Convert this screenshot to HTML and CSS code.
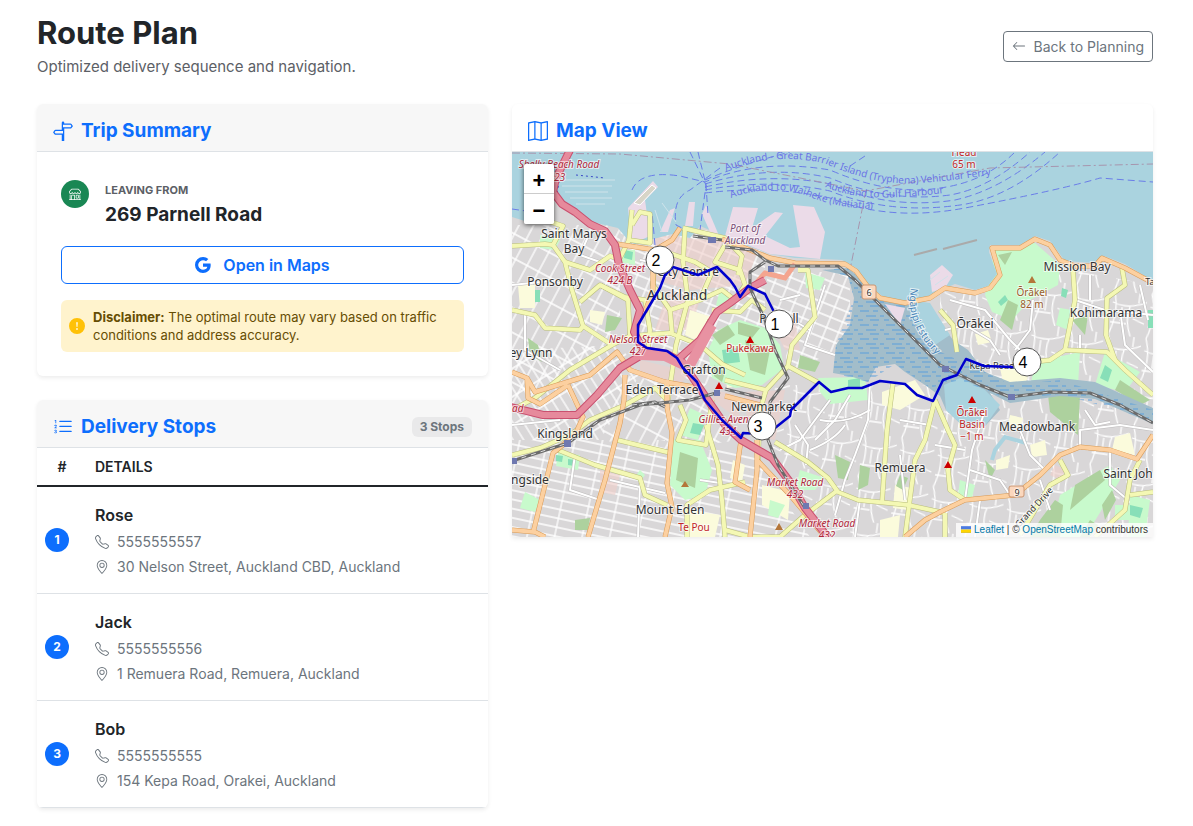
FILE: index.html
```html
<!DOCTYPE html>
<html lang="en">
<head>
<meta charset="utf-8">
<meta name="viewport" content="width=device-width, initial-scale=1">
<title>Route Plan</title>
<link rel="stylesheet" href="styles.css">
</head>
<body>
<svg class="sprite" aria-hidden="true">
  <symbol id="i-signpost" viewBox="0 0 16 16"><path d="M7 7V1.414a1 1 0 0 1 2 0V2h5a1 1 0 0 1 .8.4l.975 1.3a.5.5 0 0 1 0 .6L14.8 5.6a1 1 0 0 1-.8.4H9v10H7v-5H2a1 1 0 0 1-.8-.4L.225 9.3a.5.5 0 0 1 0-.6L1.2 7.4A1 1 0 0 1 2 7zm1 3V8H2l-.75 1L2 10zm0-5h6l.75-1L14 3H8z"/></symbol>
  <symbol id="i-list" viewBox="0 0 16 16"><path fill-rule="evenodd" d="M5 11.5a.5.5 0 0 1 .5-.5h9a.5.5 0 0 1 0 1h-9a.5.5 0 0 1-.5-.5m0-4a.5.5 0 0 1 .5-.5h9a.5.5 0 0 1 0 1h-9a.5.5 0 0 1-.5-.5m0-4a.5.5 0 0 1 .5-.5h9a.5.5 0 0 1 0 1h-9a.5.5 0 0 1-.5-.5"/><path d="M1.713 11.865v-.474H2c.217 0 .363-.137.363-.317 0-.185-.158-.31-.361-.31-.223 0-.367.152-.373.31h-.59c.016-.467.373-.787.986-.787.588-.002.954.291.957.703a.595.595 0 0 1-.492.594v.033a.615.615 0 0 1 .569.631c.003.533-.502.8-1.051.8-.656 0-1-.37-1.008-.794h.582c.008.178.186.306.422.309.254 0 .424-.145.422-.35-.002-.195-.155-.348-.414-.348h-.3zm-.004-4.699h-.604v-.035c0-.408.295-.844.958-.844.583 0 .96.326.96.756 0 .389-.257.617-.476.848l-.537.572v.03h1.054V9H1.143v-.395l.957-.99c.138-.142.293-.304.293-.508 0-.18-.147-.32-.342-.32a.33.33 0 0 0-.342.338zM2.564 5h-.635V2.924h-.031l-.598.42v-.567l.629-.443h.635z"/></symbol>
  <symbol id="i-map" viewBox="0 0 16 16"><path fill-rule="evenodd" d="M15.817.113A.5.5 0 0 1 16 .5v14a.5.5 0 0 1-.402.49l-5 1a.5.5 0 0 1-.196 0L5.5 15.01l-4.902.98A.5.5 0 0 1 0 15.5v-14a.5.5 0 0 1 .402-.49l5-1a.5.5 0 0 1 .196 0L10.5.99l4.902-.98a.5.5 0 0 1 .415.103M10 1.91l-4-.8v12.98l4 .8zm1 12.98 4-.8V1.11l-4 .8zm-6-.8V1.11l-4 .8v12.98z"/></symbol>
  <symbol id="i-phone" viewBox="0 0 16 16"><path d="M3.654 1.328a.678.678 0 0 0-1.015-.063L1.605 2.3c-.483.484-.661 1.169-.45 1.77a17.6 17.6 0 0 0 4.168 6.608 17.6 17.6 0 0 0 6.608 4.168c.601.211 1.286.033 1.77-.45l1.034-1.034a.678.678 0 0 0-.063-1.015l-2.307-1.794a.68.68 0 0 0-.58-.122l-2.19.547a1.75 1.75 0 0 1-1.657-.459L5.482 8.062a1.75 1.75 0 0 1-.46-1.657l.548-2.19a.68.68 0 0 0-.122-.58zM1.884.511a1.745 1.745 0 0 1 2.612.163L6.29 2.98c.329.423.445.974.315 1.494l-.547 2.19a.68.68 0 0 0 .178.643l2.457 2.457a.68.68 0 0 0 .644.178l2.189-.547a1.75 1.75 0 0 1 1.494.315l2.306 1.794c.829.645.905 1.87.163 2.611l-1.034 1.034c-.74.74-1.846 1.065-2.877.702a18.6 18.6 0 0 1-7.01-4.42 18.6 18.6 0 0 1-4.42-7.009c-.362-1.03-.037-2.137.703-2.877z"/></symbol>
  <symbol id="i-pin" viewBox="0 0 16 16"><path d="M12.166 8.94c-.524 1.062-1.234 2.12-1.96 3.07A32 32 0 0 1 8 14.58a32 32 0 0 1-2.206-2.57c-.726-.95-1.436-2.008-1.96-3.07C3.304 7.867 3 6.862 3 6a5 5 0 0 1 10 0c0 .862-.305 1.867-.834 2.94M8 16s6-5.686 6-10A6 6 0 0 0 2 6c0 4.314 6 10 6 10"/><path d="M8 8a2 2 0 1 1 0-4 2 2 0 0 1 0 4m0 1a3 3 0 1 0 0-6 3 3 0 0 0 0 6"/></symbol>
  <symbol id="i-arrow" viewBox="0 0 16 16"><path fill-rule="evenodd" d="M15 8a.5.5 0 0 0-.5-.5H2.707l3.147-3.146a.5.5 0 1 0-.708-.708l-4 4a.5.5 0 0 0 0 .708l4 4a.5.5 0 0 0 .708-.708L2.707 8.5H14.5A.5.5 0 0 0 15 8"/></symbol>
  <symbol id="i-google" viewBox="0 0 16 16"><path d="M15.545 6.558a9.4 9.4 0 0 1 .139 1.626c0 2.434-.87 4.492-2.384 5.885h.002C11.978 15.292 10.158 16 8 16A8 8 0 1 1 8 0a7.7 7.7 0 0 1 5.352 2.082l-2.284 2.284A4.35 4.35 0 0 0 8 3.166c-2.087 0-3.86 1.408-4.492 3.304a4.8 4.8 0 0 0 0 3.063h.003c.635 1.893 2.405 3.301 4.492 3.301 1.078 0 2.004-.276 2.722-.764h-.003a3.7 3.7 0 0 0 1.599-2.431H8v-3.08z"/></symbol>
  <symbol id="i-shop" viewBox="0 0 16 16"><path d="M2.97 1.35A1 1 0 0 1 3.73 1h8.54a1 1 0 0 1 .76.35l2.609 3.044A1.5 1.5 0 0 1 16 5.37v.255a2.375 2.375 0 0 1-4.25 1.458A2.37 2.37 0 0 1 9.875 8 2.37 2.37 0 0 1 8 7.083 2.37 2.37 0 0 1 6.125 8a2.37 2.37 0 0 1-1.875-.917A2.375 2.375 0 0 1 0 5.625V5.37a1.5 1.5 0 0 1 .361-.976zm1.78 4.275a1.375 1.375 0 0 0 2.75 0 .5.5 0 0 1 1 0 1.375 1.375 0 0 0 2.75 0 .5.5 0 0 1 1 0 1.375 1.375 0 1 0 2.75 0V5.37a.5.5 0 0 0-.12-.325L12.27 2H3.73L1.12 5.045A.5.5 0 0 0 1 5.37v.255a1.375 1.375 0 0 0 2.75 0 .5.5 0 0 1 1 0M1.5 8.5A.5.5 0 0 1 2 9v6h1v-5a1 1 0 0 1 1-1h3a1 1 0 0 1 1 1v5h6V9a.5.5 0 0 1 1 0v6h.5a.5.5 0 0 1 0 1H.5a.5.5 0 0 1 0-1H1V9a.5.5 0 0 1 .5-.5M4 15h3v-5H4zm5-5a1 1 0 0 1 1-1h2a1 1 0 0 1 1 1v3a1 1 0 0 1-1 1h-2a1 1 0 0 1-1-1zm3 0h-2v3h2z"/></symbol>
  <symbol id="i-alert" viewBox="0 0 16 16"><path d="M16 8A8 8 0 1 1 0 8a8 8 0 0 1 16 0M8 4a.905.905 0 0 0-.9.995l.35 3.507a.552.552 0 0 0 1.1 0l.35-3.507A.905.905 0 0 0 8 4m.002 6a1 1 0 1 0 0 2 1 1 0 0 0 0-2"/></symbol>
</svg>

<main class="page">
  <header class="page-head">
    <div>
      <h1>Route Plan</h1>
      <p class="lead">Optimized delivery sequence and navigation.</p>
    </div>
    <a class="btn-back" href="#planning"><svg class="icon-sm"><use href="#i-arrow"/></svg>Back to Planning</a>
  </header>

  <div class="layout">
    <div class="side">
      <section class="card">
        <div class="card-head tinted"><h2><svg class="icon-lg"><use href="#i-signpost"/></svg>Trip Summary</h2></div>
        <div class="card-body">
          <div class="origin">
            <span class="origin-icon"><svg class="icon-xs"><use href="#i-shop"/></svg></span>
            <div>
              <div class="eyebrow">LEAVING FROM</div>
              <div class="address">269 Parnell Road</div>
            </div>
          </div>
          <a class="btn-maps" href="#maps"><svg class="icon-md"><use href="#i-google"/></svg>Open in Maps</a>
          <div class="notice" role="note">
            <svg class="icon-md"><use href="#i-alert"/></svg>
            <p><strong>Disclaimer:</strong> The optimal route may vary based on traffic conditions and address accuracy.</p>
          </div>
        </div>
      </section>

      <section class="card">
        <div class="card-head tinted"><h2><svg class="icon-lg"><use href="#i-list"/></svg>Delivery Stops</h2><span class="pill">3 Stops</span></div>
        <table class="stops">
          <thead><tr><th class="num" scope="col">#</th><th scope="col">DETAILS</th></tr></thead>
          <tbody>
            <tr><td class="num"><span class="badge">1</span></td><td>
              <div class="name">Rose</div>
              <div class="line"><svg class="icon-sm"><use href="#i-phone"/></svg>5555555557</div>
              <div class="line"><svg class="icon-sm"><use href="#i-pin"/></svg>30 Nelson Street, Auckland CBD, Auckland</div></td></tr>
            <tr><td class="num"><span class="badge">2</span></td><td>
              <div class="name">Jack</div>
              <div class="line"><svg class="icon-sm"><use href="#i-phone"/></svg>5555555556</div>
              <div class="line"><svg class="icon-sm"><use href="#i-pin"/></svg>1 Remuera Road, Remuera, Auckland</div></td></tr>
            <tr><td class="num"><span class="badge">3</span></td><td>
              <div class="name">Bob</div>
              <div class="line"><svg class="icon-sm"><use href="#i-phone"/></svg>5555555555</div>
              <div class="line"><svg class="icon-sm"><use href="#i-pin"/></svg>154 Kepa Road, Orakei, Auckland</div></td></tr>
          </tbody>
        </table>
      </section>
    </div>

    <section class="card map-card">
      <div class="card-head"><h2><svg class="icon-lg"><use href="#i-map"/></svg>Map View</h2></div>
      <div class="map">
        <svg class="map-canvas" viewBox="512 152 641 385" role="img" aria-label="Delivery route through Auckland">
          <defs>
            <pattern id="gA" width="27" height="9" patternUnits="userSpaceOnUse" patternTransform="rotate(12)"><path class="lane" d="M0 4H27M6 0V9"/></pattern>
            <pattern id="gB" width="9" height="24" patternUnits="userSpaceOnUse" patternTransform="rotate(-32)"><path class="lane" d="M4 0V24M0 8H9"/></pattern>
            <pattern id="gC" width="13" height="22" patternUnits="userSpaceOnUse" patternTransform="rotate(28)"><path class="lane" d="M5 0V22M0 9H13"/></pattern>
            <pattern id="gD" width="38" height="44" patternUnits="userSpaceOnUse" patternTransform="rotate(8)"><path class="lane" d="M4 0Q12 20 4 44M4 12Q20 18 38 8M22 14Q18 28 26 44M4 32H20M26 26L38 30M30 0V10M14 16V30"/></pattern>
            <pattern id="gE" width="13" height="11" patternUnits="userSpaceOnUse" patternTransform="rotate(22)"><path class="lane" d="M5 0V11M0 5H13"/></pattern>
            <pattern id="mud" width="26" height="14" patternUnits="userSpaceOnUse"><path d="M2 3H11M15 3H20M8 8H18M22 8H26M0 12H5M12 12H21" stroke="#5a9fdc" stroke-width="1"/></pattern>
            <path id="ferryA" d="M726 171Q776 151 826 164Q880 187 922 183Q960 180 1010 172"/>
            <path id="ferryB" d="M731 198Q772 183 808 196Q838 210 890 209"/>
            <path id="ferryC" d="M825 187Q855 200 900 197Q935 195 965 190"/>
            <path id="estuary" d="M911 288Q904 325 940 358"/>
            <path id="grand" d="M1019 528L1056 488"/>
            <g id="yellow">
              <path d="M512 310L535 315L545 328L580 330L583 326L572 290L565 262L553 245L563 226L545 220"/>
              <path d="M583 326L612 345L570 370L535 398L512 410"/><path d="M565 262L590 270L610 256L616 258"/>
              <path d="M580 302L600 285L625 297L645 300L650 330L648 350"/><path d="M600 285L628 300L630 336L612 345"/>
              <path d="M630 336L670 333L700 345L722 364L745 375"/><path d="M512 246L545 244L553 245"/>
              <path d="M632 210L629 240L618 262M629 240L650 243V214L640 212L632 225"/>
              <path d="M655 255L653 285L670 310L700 300L712 272L695 262L660 250"/><path d="M670 310L672 333M700 300L722 290L735 300L745 285L740 270L715 262L725 245"/>
              <path d="M685 228L683 262L688 300L676 345L668 400"/><path d="M683 228L725 238L742 256L738 275"/><path d="M712 310L740 312L752 300L765 310"/>
              <path d="M798 270H808L815 317L792 345L788 366L766 390L760 410L758 462"/><path d="M788 366L819 383"/>
              <path d="M725 380L766 390M700 345L710 320"/>
              <path d="M512 455L540 448L570 435L590 420L625 405L655 388L667 400"/><path d="M617 440L671 453"/>
              <path d="M558 450L595 465L640 478L645 495L667 505"/><path d="M687 537L687 505L710 490L745 482"/>
              <path d="M680 405L686 420L678 440L706 445L712 400"/><path d="M706 425L718 465L722 500L725 537"/>
              <path d="M775 442L808 462L828 478L838 492L858 500L908 505L945 513"/><path d="M838 490L805 515L780 537H750L725 530"/>
              <path d="M893 383L887 430L882 503"/><path d="M935 400L925 440L915 460L905 537"/><path d="M935 400L948 430L955 445L948 470L950 490L965 500"/>
              <path d="M1033 362L1050 360L1065 350L1107 352L1125 370L1153 395"/><path d="M1073 270L1075 300L1065 350"/>
              <path d="M1122 268L1125 285L1107 298L1106 335L1115 360"/><path d="M940 310L953 325L957 352"/>
              <path d="M1060 460L1068 475L1050 485L1020 535"/><path d="M1140 460L1130 480L1125 510L1095 537M1130 495L1153 492"/>
              <path d="M945 513V537"/>
            </g>
            <g id="orange">
              <path d="M722 239L745 248L770 258L795 263L845 264L856 271L868 287L880 298L905 303L930 298L945 288L975 293L990 288L1000 275L992 248L1020 248L1035 239L1050 245L1060 260L1075 266L1095 266L1102 258L1125 268L1153 283"/>
              <path d="M512 372L527 378L535 392L590 375L617 352L630 370L665 382L700 388"/><path d="M527 378L528 398L540 404L568 385"/>
              <path d="M568 385L583 417L575 435L553 453L533 533"/><path d="M625 375L624 400L620 423L605 480L588 537"/>
              <path d="M667 380L667 407L672 433L667 483L672 507L665 537"/><path d="M512 530L535 532L545 537"/>
              <path d="M617 244L655 250L672 240L680 228"/><path d="M653 250L653 290L645 312"/>
              <path d="M725 396L760 405"/><path d="M741 440L735 482L750 490M757 440V470L750 537"/><path d="M757 460L790 495L825 537"/>
              <path d="M905 537L925 520L940 512L965 500L1015 495L1040 475L1060 455L1080 447L1110 450L1137 459L1153 435"/>
            </g>
            <g id="red">
              <path d="M570 150L556 178L553 192L562 204L575 212L590 224L605 231L615 245L619 265L630 290L640 310L634 332L643 350L667 354L683 363L703 393L725 425L741 440L772 458L790 482L805 508L830 540"/>
              <path d="M667 354L640 356L620 368L597 395L577 415L543 415L510 407"/>
              <path d="M675 362L700 340L717 312L730 303L750 288L765 280"/>
            </g>
            <g id="street">
              <path d="M870 383L868 420L855 455L845 480L835 515"/><path d="M795 425L808 445L806 465"/><path d="M965 500L972 450L985 410"/>
              <path d="M1020 430L1030 455L1045 470"/><path d="M1015 350L1030 330L1033 300"/><path d="M950 300L985 310L1010 340L1020 350"/>
              <path d="M1075 300L1105 310L1153 315"/><path d="M1080 450V430L1120 425L1153 430"/><path d="M1110 452V485L1128 500"/>
              <path d="M900 420L930 425M935 445L965 450M900 455L905 500M850 395L835 420L815 440"/>
              <path d="M1080 335V348M1120 310L1125 345L1153 372M1090 275V300M1140 285L1148 320"/>
              <path d="M970 470L1000 480L1010 495M980 500L975 537M1040 480L1050 510M1085 410L1095 425L1110 422"/>
              <path d="M945 330L965 325L990 340L1000 355"/><path d="M512 425L560 420M640 483L638 537M610 480L665 493M575 455L570 490L600 500"/>
              <path d="M512 285L560 280M525 315V350L560 370M590 232L580 255L600 262M640 260L650 262M700 480L720 483"/>
              <path d="M780 300L800 295M775 310L810 330M825 285L815 315L805 345L835 355"/>
              <path d="M820 420Q845 425 870 410M810 450Q835 440 845 425M860 500L855 537M780 450L800 440L830 400"/>
            </g>
            <path id="rail" d="M512 461L540 452L568 443L600 420L640 405L690 400L720 392M632 405L655 402L665 407M725 247L752 250L765 260L778 266L838 266L855 280L912 337L940 365L980 385L1010 397L1050 392L1090 393L1120 405L1153 423M765 262L750 272L750 288L765 320L775 350L788 378L770 402L768 440L778 465L805 508M725 389L762 398M693 236L722 240"/>
          </defs>

          <rect x="512" y="152" width="641" height="385" fill="#d9d7d8"/>

          <!-- street texture per suburb -->
          <path fill="url(#gC)" d="M512 225H620V340L512 410Z"/>
          <path fill="url(#gE)" d="M620 230H765V330L700 390L640 340Z"/>
          <path fill="url(#gB)" d="M512 350L620 345L640 375L600 440H512Z"/>
          <path fill="url(#gA)" d="M512 440H665V537H512Z"/>
          <path fill="url(#gC)" d="M620 375L700 385L740 440L665 450L600 440Z"/>
          <path fill="url(#gA)" d="M665 450H750L810 537H665Z"/>
          <path fill="url(#gE)" d="M765 272H850V345L790 372Z"/>
          <path fill="url(#gD)" d="M775 385H940V537H830L770 450Z"/>
          <path fill="url(#gD)" d="M940 285L1000 300L1070 270L1153 285V537H940Z"/>

          <!-- retail and industrial areas -->
          <g fill="#f0cfca" opacity=".6">
            <path d="M655 235L760 245L745 285L690 290L655 280Z"/><path d="M668 290L700 300L690 330L655 330Z"/>
            <path d="M745 392L785 390L775 440L748 435Z"/><path d="M775 330L795 320L800 350L785 350Z"/>
            <path d="M640 360L690 372L680 385L640 378Z"/><path d="M715 390L735 395L740 420L712 400Z"/>
            <path d="M1055 465L1066 470L1060 480L1050 475Z"/><path d="M600 470L620 475L615 495L600 492Z"/>
          </g>
          <!-- schools and hospitals -->
          <g fill="#fbfbdc">
            <path d="M518 285L535 285L535 308L520 308Z"/><path d="M590 310L605 312L602 325L590 322Z"/>
            <path d="M690 310L715 318L705 345L685 335Z"/><path d="M725 370L745 372L745 385L727 388Z"/>
            <path d="M688 510L720 515L715 537H685Z"/><path d="M762 485L790 492L788 520L762 505Z"/>
            <path d="M882 392L915 380L925 395L900 410L882 405Z"/><path d="M895 485L912 488L908 510L893 508Z"/>
            <path d="M1115 437L1130 433L1135 455L1112 450Z"/><path d="M1010 415L1023 418L1020 428L1008 425Z"/>
            <path d="M1030 445L1045 440L1047 455L1032 457Z"/><path d="M975 334L988 330L992 342L978 345Z"/>
            <path d="M1000 368L1030 370L1025 385L1003 382Z"/><path d="M733 460L745 465L742 482L730 478Z"/>
            <path d="M996 460L1010 455L1008 468L996 470Z"/><path d="M880 520L900 515L898 537H880Z"/>
          </g>
          <!-- parks -->
          <g fill="#c8facc">
            <path d="M708 350L718 330L740 320L765 328L780 345L784 368L762 385L735 388L712 378Z"/>
            <path d="M985 295L995 250L1035 243L1060 265L1058 285L1030 300L1012 320L992 312Z"/>
            <path d="M818 378L865 377L868 400L830 404L820 392Z"/><path d="M1035 362L1080 352L1078 385L1030 388Z"/>
            <path d="M1105 352L1140 372L1125 392L1095 385Z"/><path d="M800 470L825 478L815 490L795 490Z"/>
            <path d="M673 440L700 440L712 470L705 495L685 500L670 485Z"/><path d="M558 453L580 455L578 470L556 466Z"/>
            <path d="M525 492L540 500L535 512L520 508Z"/><path d="M640 470L645 475L640 482L634 478Z"/>
            <path d="M1060 495L1110 465L1120 480L1085 537H1050Z"/><path d="M1130 495L1150 500L1145 537H1128Z"/>
            <path d="M1115 505H1135V520H1115Z"/><path d="M960 480L975 485L972 498L958 495Z"/>
            <path d="M805 272L825 278L820 290L806 288Z"/><path d="M615 250L635 250V265L620 262Z"/>
            <path d="M720 290L738 300L728 312L716 305Z"/><path d="M1060 308L1072 310L1068 330L1056 325Z"/>
            <path d="M770 500L785 505L778 518L768 515Z"/><path d="M540 235L560 240L555 250L540 248Z"/>
            <path d="M690 408L705 415L698 440L680 435Z"/>
          </g>
          <g fill="#add19e">
            <path d="M712 335L728 325L735 335L720 345Z"/><path d="M745 340L770 350L765 375L750 370Z"/>
            <path d="M738 322L760 328L752 338L738 334ZM714 365L725 372L722 382L714 376Z"/>
            <path d="M1048 395L1080 395L1078 435L1050 412Z"/><path d="M607 315L622 318L615 330L605 332Z"/>
            <path d="M680 452L698 458L695 488L676 480Z"/><path d="M860 465L870 468L868 485L858 490Z"/>
            <path d="M1055 500L1063 505L1060 537H1030L1040 520Z"/><path d="M1075 485L1100 470L1105 480L1070 510Z"/>
            <path d="M800 355L820 362L815 372L798 368Z"/><path d="M900 475L908 478L903 490L896 486Z"/>
            <path d="M1000 320L1008 300L1018 305L1012 330Z"/><path d="M998 255L1012 252L1005 265Z"/>
            <path d="M528 338L538 345L542 362L530 355Z"/><path d="M1072 320L1088 315L1085 335Z"/>
            <path d="M575 520L590 518L588 530H575Z"/><path d="M1120 380L1150 400L1140 405L1115 390Z"/>
            <path d="M985 460L995 470L990 480Z"/><path d="M835 455L850 462L848 480L838 478Z"/>
            <path d="M1102 505L1112 490L1116 500L1105 520ZM1090 520L1098 525L1090 537H1080Z"/>
          </g>
          <g fill="#88dfb8">
            <path d="M625 250L633 252L632 260L624 258Z"/><path d="M722 350L738 348L740 362L724 364Z"/>
            <path d="M848 380L860 378L860 387L848 388Z"/><path d="M535 290L540 290L540 302L535 302Z"/>
            <path d="M556 455L563 456L562 462L556 461Z"/><path d="M568 459L575 460L574 466L568 465Z"/>
            <path d="M1105 365L1112 370L1108 382L1100 378Z"/><path d="M693 423L704 425L700 435L690 433Z"/>
            <path d="M1130 505L1143 508L1140 518L1130 515Z"/><path d="M998 302L1005 295L1008 300L1001 306Z"/>
            <path d="M1148 310H1153V328H1148Z"/><path d="M1062 288L1068 290L1066 298L1061 296Z"/>
          </g>

          <!-- harbour -->
          <path fill="#aad3df" d="M512 152H1153V281L1125 264L1104 256L1094 263L1065 261L1050 241L1035 236L1020 245L990 245L989 252L997 274L988 286L975 290L955 284L940 290L925 299L905 301L885 298L870 287L856 268L842 260L822 259L795 258L770 254L745 245L722 238L712 231L700 226L690 238L672 234L650 240L632 245L618 228L592 222L575 210L560 199L550 196L544 215L528 222L512 217Z"/>
          <path fill="#a2bdca" d="M822 270L848 268L860 278L880 300L905 305L925 303L940 322L953 340L968 350L985 372L1010 382L1060 378L1095 382L1153 408V424L1095 399L1060 396L1010 403L990 393L1000 410L985 426L965 428L946 410L940 396L925 385L905 372L895 364L876 367L868 382L850 376L833 373L836 345L850 325L854 298L848 276Z"/>
          <path fill="#aad3df" d="M944 385L960 378L985 390L1000 405L985 426L965 428L946 410Z"/>
          <path fill="#aad3df" d="M908 300L930 303L950 335L935 345L912 320Z"/>
          <path fill="url(#mud)" d="M822 270L848 268L880 300L905 305L925 345L985 372L1010 385L1060 380L1153 410V420L1060 394L1010 400L960 380L930 388L895 364L868 382L833 373L836 345L854 298L848 276Z"/>
          <path fill="none" stroke="#aad3df" stroke-width="4" d="M1026 443L1005 437L995 450L992 460"/>
          <!-- wharves -->
          <g fill="#ebdbe8">
            <path d="M725 236L733 207L758 208L752 228L775 212L783 213L765 236L790 248L800 247L793 205L814 207L825 232L820 259L770 254Z"/>
            <path d="M628 208L653 181L658 187L645 200L650 236L632 244Z"/><path d="M689 202L695 202L693 226L685 226Z"/>
            <path d="M706 205L720 238L712 236L702 214Z"/><path d="M670 210L675 208L668 232L660 232Z"/>
            <path d="M885 304L905 308L900 325Z"/><path d="M930 275L942 265L953 275L945 288L932 292Z"/>
          </g>
          <path d="M560 180H615M562 186H612M565 192H608M570 198H612M576 204H605M655 210L662 232M662 203L676 222M930 280L940 272M935 285L948 276" stroke="#cfe3ea" fill="none"/>
          <path d="M634 203L652 185L656 188L640 205Z" fill="#d8d5c8" stroke="#fff"/>
          <path d="M914 255L937 249M943 249L977 240" stroke="#aaa" stroke-width="2"/>

          <!-- ferry lines -->
          <g fill="none" stroke="#6a7de8" stroke-width="1" stroke-dasharray="7 4">
            <path d="M632 190Q640 170 680 176L705 182Q760 158 830 170Q890 196 940 188Q985 182 1015 152"/>
            <path d="M705 184Q770 164 830 178Q890 203 950 195Q990 188 1030 152"/>
            <path d="M705 187Q770 172 830 184Q890 210 955 200Q1000 190 1045 152"/>
            <path d="M705 190Q770 178 830 191Q890 215 960 205Q1010 198 1060 152"/>
            <path d="M705 193Q770 185 830 198Q890 222 965 208Q1060 190 1100 178L1153 182"/>
            <path d="M690 152L706 185L700 230"/><path d="M698 152L706 185L708 215"/><path d="M720 168L690 190Q672 198 676 225L690 232"/>
            <path d="M705 180Q740 165 790 152"/><path d="M850 166L868 154"/>
            <path d="M655 245L652 212"/><path d="M512 209L526 211"/>
          </g>
          <path d="M512 153L620 154L730 164L865 191L990 168L1153 164M866 190L851 265" fill="none" stroke="#a795ad" stroke-dasharray="8 3 2 3"/>
          <path d="M560 176L556 200L575 210M576 175L605 178" stroke="#3b49c8" fill="none" stroke-dasharray="2 3"/>

          <!-- roads: casing below, surface above -->
          <use class="road street-edge" href="#street"/>
          <use class="road street" href="#street"/>
          <use class="road yellow-edge" href="#yellow"/>
          <use class="road yellow" href="#yellow"/>
          <use class="road orange-edge" href="#orange"/>
          <use class="road orange" href="#orange"/>
          <path d="M752 288L765 273L785 278L795 264" fill="none" stroke="#f4a58f" stroke-width="5"/>
          <use class="road red-edge" href="#red"/>
          <use class="road red" href="#red"/>
          <path d="M640 355L665 356L690 368M690 365L712 325" fill="none" stroke="#e892a2" stroke-width="10"/>
          <use class="road rail" href="#rail"/>
          <use class="road rail-dash" href="#rail"/>

          <path fill="#6f78b0" d="M564 440H571V447H564ZM512 458H517V464H512ZM714 390H720V396H714ZM768 266H774V272H768ZM708 237H716V243H708ZM942 366H949V372H942ZM1008 394H1015V400H1008ZM803 503H809V509H803Z"/>
          <path fill="#c00" d="M750 336L754 343H746ZM719 382L723 389H715ZM972 396L976 403H968ZM948 461L952 468H944Z"/>
          <path fill="#b4763a" d="M1032 276L1036 283H1028ZM685 481L689 487H681ZM779 523L783 530H775Z"/>
          <g fill="#fbd7bd" stroke="#c99572"><rect x="862" y="285" width="14" height="14" rx="2"/><rect x="1009" y="486" width="15" height="11" rx="2"/></g>

          <!-- labels -->
          <g class="lbl ferry">
            <text><textPath href="#ferryA">Auckland - Great Barrier Island (Tryphena) Vehicular Ferry</textPath></text>
            <text><textPath href="#ferryB">Auckland to Waiheke (Matiatia)</textPath></text>
            <text><textPath href="#ferryC">Auckland to Gulf Harbour</textPath></text>
            <text class="water"><textPath href="#estuary">Ngāpipi Estuary</textPath></text>
          </g>
          <g class="lbl place">
            <text x="574" y="238">Saint Marys</text><text x="574" y="253">Bay</text>
            <text x="555" y="286">Ponsonby</text><text x="531" y="357">ey Lynn</text>
            <text x="688" y="276">City Centre</text><text class="big" x="677" y="300">Auckland</text>
            <text x="704" y="374">Grafton</text><text x="662" y="394">Eden Terrace</text>
            <text x="565" y="438">Kingsland</text><text x="530" y="484">ngside</text>
            <text x="670" y="514">Mount Eden</text><text x="779" y="323">Parnell</text>
            <text x="764" y="411">Newmarket</text><text x="900" y="472">Remuera</text>
            <text x="1077" y="271">Mission Bay</text><text x="1106" y="317">Kohimarama</text>
            <text x="975" y="328">Ōrākei</text><text x="1037" y="431">Meadowbank</text>
            <text x="1128" y="478">Saint Joh</text>
          </g>
          <g class="lbl junction">
            <text x="559" y="168">Shelly Beach Road</text><text x="557" y="181">423</text>
            <text x="620" y="272">Cook Street</text><text x="620" y="284">424 B</text>
            <text x="638" y="343">Nelson Street</text><text x="638" y="355">427</text>
            <text x="729" y="423">Gillies Avenue</text><text x="728" y="435">434</text>
            <text x="795" y="486">Market Road</text><text x="795" y="498">432</text>
            <text x="827" y="527">Market Road</text><text x="827" y="539">432</text>
            <text x="515" y="412">oad</text>
          </g>
          <g class="lbl peak">
            <text x="750" y="352">Pukekawa</text><text x="694" y="531">Te Pou</text>
            <text x="964" y="156">Head</text><text x="964" y="168">65 m</text>
            <text x="972" y="416">Ōrākei</text><text x="972" y="428">Basin</text><text x="972" y="440">−1 m</text>
          </g>
          <g class="lbl hill"><text x="1032" y="296">Ōrākei</text><text x="1032" y="308">82 m</text></g>
          <g class="lbl port"><text x="745" y="232">Port of</text><text x="745" y="244">Auckland</text></g>
          <g class="lbl road-name">
            <text><textPath href="#grand">Grand Drive</textPath></text>
            <text x="992" y="369">Kepa Road</text><text x="1150" y="285">Ta</text>
            <text x="869" y="296">6</text><text x="1017" y="496">9</text>
          </g>

          <!-- route and stops -->
          <path class="route" d="M773 310L765 294L748 286L740 297L735 287L730 280L717 267L698 275L673 267L665 275L660 288L638 325V342L647 348L667 351L677 358L683 368L697 382L705 400L722 420L741 438L743 433L761 434L775 428L790 416L791 410L819 382L831 392L848 388H862L880 381L905 384L917 395L933 401L943 380L957 375L966 359L984 366L1012 367"/>
          <g class="stop">
            <circle cx="779" cy="324" r="14"/><circle cx="660" cy="260" r="14"/><circle cx="762" cy="426" r="14"/><circle cx="1027" cy="362" r="14"/>
            <text x="775" y="330">1</text><text x="656" y="266">2</text><text x="758" y="432">3</text><text x="1023" y="368">4</text>
          </g>
        </svg>
        <div class="zoom">
          <button type="button" aria-label="Zoom in">+</button>
          <button type="button" aria-label="Zoom out">−</button>
        </div>
        <div class="credit"><svg class="flag" viewBox="0 0 12 8"><path fill="#4C7BE1" d="M0 0h12v4H0z"/><path fill="#FFD500" d="M0 4h12v3H0z"/><path fill="#E0BC00" d="M0 7h12v1H0z"/></svg> <a href="#leaflet">Leaflet</a> | © <a href="#osm">OpenStreetMap</a> contributors</div>
      </div>
    </section>
  </div>
</main>
</body>
</html>
```

FILE: styles.css
```css
* { box-sizing: border-box; }
body { margin: 0; background: #fff; color: #212529; font: 16px/24px Inter, "Liberation Sans", sans-serif; }
h1, h2, p { margin: 0; }
a { text-decoration: none; }
svg { fill: currentColor; }
.sprite { position: absolute; width: 0; height: 0; }
.icon-xs { width: 12px; height: 12px; }
.icon-sm { width: 14px; height: 14px; }
.icon-md { width: 16px; height: 16px; }
.icon-lg { width: 20px; height: 20px; }
.icon-xs, .icon-sm, .icon-md, .icon-lg { flex: none; display: block; }

.page { padding: 13px 40px 18px 37px; }
.page-head { display: flex; justify-content: space-between; align-items: center; margin-bottom: 25px; }
h1 { font-size: 31px; line-height: 40px; font-weight: 700; }
.lead { padding-top: 2px; color: #5c6066; font-size: 15px; }
.btn-back { display: flex; align-items: center; gap: 8px; padding: 4px 8px; border: 1px solid #6c757d; border-radius: 4px; color: #6c757d; font-size: 14px; line-height: 21px; }

.layout { display: grid; grid-template-columns: repeat(12, minmax(0, 1fr)); gap: 24px; align-items: start; }
.side { grid-column: span 5; display: grid; gap: 24px; }
.map-card { grid-column: span 7; }
.card { background: #fff; border-radius: 6px; box-shadow: 0 2px 4px rgba(0, 0, 0, .075); overflow: hidden; }
.map-card { border-radius: 6px 6px 0 0; }
.card-head { display: flex; align-items: center; justify-content: space-between; padding: 15px 16px 8px; border-bottom: 1px solid #dee2e6; }
.tinted { background: #f7f7f7; }
h2 { display: flex; align-items: center; gap: 8px; color: #0d6efd; font-size: 19px; line-height: 24px; font-weight: 700; }
.card-body { padding: 24px; }
.origin { display: flex; gap: 16px; padding-top: 4px; margin-bottom: 16px; }
.origin-icon { display: grid; place-items: center; flex: none; width: 28px; height: 28px; border-radius: 50%; background: #198754; color: #fff; }
.eyebrow { color: #5c6066; font-size: 11px; line-height: 20px; font-weight: 700; }
.address { font-size: 19px; line-height: 30px; font-weight: 700; }
.btn-maps { display: flex; align-items: center; justify-content: center; gap: 12px; padding: 6px 12px; border: 1px solid #0d6efd; border-radius: 6px; color: #0d6efd; font-weight: 600; }
.notice { display: flex; align-items: center; gap: 8px; margin-top: 16px; padding: 8px; border-radius: 6px; background: #fff3cd; color: #664d03; font-size: 13px; line-height: 18px; }
.notice svg { color: #ffc107; }
.pill { padding: 4px 8px; border-radius: 6px; background: #e9e9ea; color: #6c757d; font-size: 12px; line-height: 12px; font-weight: 700; }

.stops { width: 100%; table-layout: fixed; border-collapse: collapse; }
.stops th { padding: 8px; font-size: 14px; line-height: 21px; font-weight: 600; text-align: left; border-bottom: 2px solid #212529; }
.stops td { padding: 16px 8px; border-bottom: 1px solid #dee2e6; vertical-align: middle; }
.stops .num { width: 50px; }
.stops th.num { text-align: center; }
.badge { display: grid; place-items: center; width: 24px; height: 24px; border-radius: 50%; background: #0d6efd; color: #fff; font-size: 12px; font-weight: 700; }
.name { font-weight: 600; }
.line { display: flex; align-items: center; gap: 8px; padding-top: 4px; color: #6c757d; font-size: 14px; line-height: 21px; }

.map { position: relative; }
.map-canvas { display: block; width: 100%; height: auto; }
.lane { fill: none; stroke: #fff; stroke-width: 1.3; }
.road { fill: none; stroke-linejoin: round; stroke-linecap: butt; }
.street-edge { stroke: #bdbbbb; stroke-width: 3; }
.street { stroke: #fff; stroke-width: 2; }
.yellow-edge { stroke: #b9bd7c; stroke-width: 5; }
.yellow { stroke: #f4f8b4; stroke-width: 4; }
.orange-edge { stroke: #d99a55; stroke-width: 5; }
.orange { stroke: #fcd0a0; stroke-width: 4; }
.red-edge { stroke: #c9506f; stroke-width: 8; }
.red { stroke: #e68a9c; stroke-width: 6; }
.rail { stroke: #6b6b6b; stroke-width: 3; }
.rail-dash { stroke: #ddd; stroke-width: 1; stroke-dasharray: 5 5; }
.lbl { font-family: "Noto Sans", sans-serif; text-anchor: middle; paint-order: stroke; stroke: rgba(255, 255, 255, .65); stroke-width: 2px; font-size: 11px; }
.place { fill: #333; font-size: 12px; }
.big { font-size: 14px; }
.junction { fill: #b0283c; font-size: 10px; font-style: italic; }
.peak { fill: #c22626; font-size: 10px; }
.hill { fill: #9a5b2c; font-size: 10px; }
.port { fill: #7b4f77; font-size: 10px; font-style: italic; }
.road-name { fill: #333; font-size: 9px; }
.ferry { fill: #6a74e6; stroke: none; font-size: 10px; text-anchor: start; }
.water { fill: #4a86b8; stroke: rgba(255, 255, 255, .65); }
.road-name textPath { text-anchor: start; }
.route { fill: none; stroke: #0000cc; stroke-width: 2.5; stroke-linejoin: round; stroke-linecap: round; }
.stop circle { fill: #fff; stroke: #555; stroke-width: 1; }
.stop text { fill: #000; font: 16px "Liberation Sans", sans-serif; text-anchor: middle; }
.zoom { position: absolute; left: 12px; top: 12px; width: 30px; border-radius: 2px; box-shadow: 0 1px 5px rgba(0, 0, 0, .65); overflow: hidden; }
.zoom button { display: block; width: 100%; height: 30px; padding: 4px 0 0; border: 0; border-bottom: 1px solid #ccc; background: #fff; color: #000; font: bold 22px/26px "Liberation Sans", sans-serif; }
.zoom button:last-child { border-bottom: 0; }
.credit { position: absolute; right: 0; bottom: 0; padding: 0 5px; background: rgba(255, 255, 255, .8); color: #333; font: 10px/14px "Liberation Sans", sans-serif; white-space: nowrap; }
.credit a { color: #0078a8; }
.flag { width: 10px; height: 7px; }
```
